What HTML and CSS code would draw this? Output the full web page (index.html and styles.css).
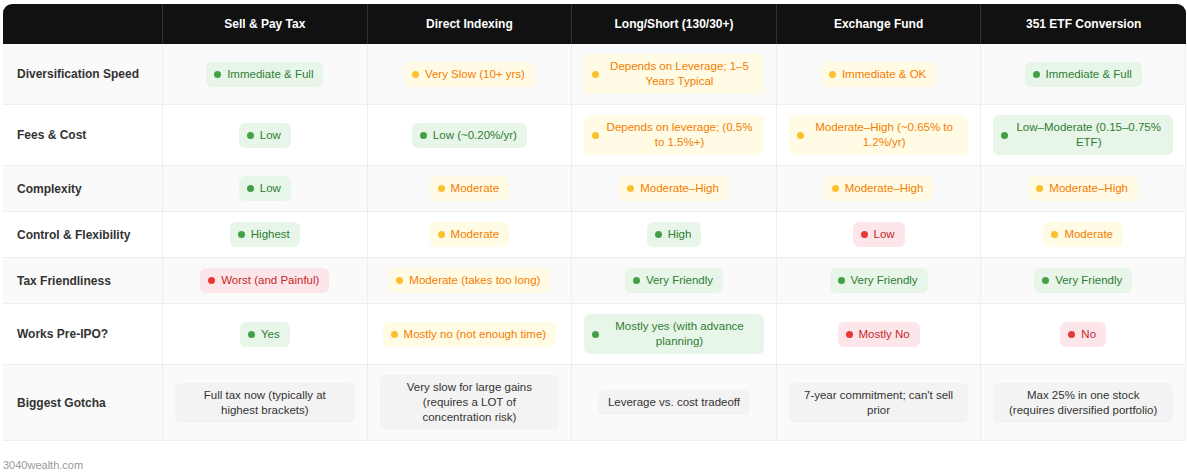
FILE: index.html
```html
<!DOCTYPE html>
<html lang="en">
<head>
  <meta charset="UTF-8">
  <meta name="viewport" content="width=device-width, initial-scale=1.0">
  <title>Concentrated Stock Strategies Compared</title>
  <link rel="stylesheet" href="styles.css">
</head>
<body>
  <div class="compare-wrap">
    <table class="compare-table">
      <colgroup>
        <col class="col-label">
        <col><col><col><col><col>
      </colgroup>
      <thead>
        <tr>
          <th></th>
          <th>Sell &amp; Pay Tax</th>
          <th>Direct Indexing</th>
          <th>Long/Short (130/30+)</th>
          <th>Exchange Fund</th>
          <th>351 ETF Conversion</th>
        </tr>
      </thead>
      <tbody>
        <tr>
          <td class="label">Diversification Speed</td>
          <td><span class="badge good"><i></i><span>Immediate &amp; Full</span></span></td>
          <td><span class="badge mid"><i></i><span>Very Slow (10+ yrs)</span></span></td>
          <td><span class="badge mid"><i></i><span>Depends on Leverage; 1–5 Years Typical</span></span></td>
          <td><span class="badge mid"><i></i><span>Immediate &amp; OK</span></span></td>
          <td><span class="badge good"><i></i><span>Immediate &amp; Full</span></span></td>
        </tr>
        <tr>
          <td class="label">Fees &amp; Cost</td>
          <td><span class="badge good"><i></i><span>Low</span></span></td>
          <td><span class="badge good"><i></i><span>Low (~0.20%/yr)</span></span></td>
          <td><span class="badge mid"><i></i><span>Depends on leverage; (0.5% to 1.5%+)</span></span></td>
          <td><span class="badge mid"><i></i><span>Moderate–High (~0.65% to 1.2%/yr)</span></span></td>
          <td><span class="badge good"><i></i><span>Low–Moderate (0.15–0.75% ETF)</span></span></td>
        </tr>
        <tr>
          <td class="label">Complexity</td>
          <td><span class="badge good"><i></i><span>Low</span></span></td>
          <td><span class="badge mid"><i></i><span>Moderate</span></span></td>
          <td><span class="badge mid"><i></i><span>Moderate–High</span></span></td>
          <td><span class="badge mid"><i></i><span>Moderate–High</span></span></td>
          <td><span class="badge mid"><i></i><span>Moderate–High</span></span></td>
        </tr>
        <tr>
          <td class="label">Control &amp; Flexibility</td>
          <td><span class="badge good"><i></i><span>Highest</span></span></td>
          <td><span class="badge mid"><i></i><span>Moderate</span></span></td>
          <td><span class="badge good"><i></i><span>High</span></span></td>
          <td><span class="badge bad"><i></i><span>Low</span></span></td>
          <td><span class="badge mid"><i></i><span>Moderate</span></span></td>
        </tr>
        <tr>
          <td class="label">Tax Friendliness</td>
          <td><span class="badge bad"><i></i><span>Worst (and Painful)</span></span></td>
          <td><span class="badge mid"><i></i><span>Moderate (takes too long)</span></span></td>
          <td><span class="badge good"><i></i><span>Very Friendly</span></span></td>
          <td><span class="badge good"><i></i><span>Very Friendly</span></span></td>
          <td><span class="badge good"><i></i><span>Very Friendly</span></span></td>
        </tr>
        <tr>
          <td class="label">Works Pre-IPO?</td>
          <td><span class="badge good"><i></i><span>Yes</span></span></td>
          <td><span class="badge mid"><i></i><span>Mostly no (not enough time)</span></span></td>
          <td><span class="badge good"><i></i><span>Mostly yes (with advance planning)</span></span></td>
          <td><span class="badge bad"><i></i><span>Mostly No</span></span></td>
          <td><span class="badge bad"><i></i><span>No</span></span></td>
        </tr>
        <tr>
          <td class="label">Biggest Gotcha</td>
          <td><span class="note">Full tax now (typically at highest brackets)</span></td>
          <td><span class="note">Very slow for large gains (requires a LOT of concentration risk)</span></td>
          <td><span class="note">Leverage vs. cost tradeoff</span></td>
          <td><span class="note">7-year commitment; can't sell prior</span></td>
          <td><span class="note">Max 25% in one stock (requires diversified portfolio)</span></td>
        </tr>
      </tbody>
    </table>
  </div>

  <footer class="source">3040wealth.com</footer>
</body>
</html>
```

FILE: styles.css
```css
* {
  margin: 0;
  padding: 0;
  box-sizing: border-box;
}

body {
  font-family: 'Liberation Sans', Arial, sans-serif;
  font-size: 11.5px;
  color: #333;
  background-color: #fff;
  padding: 4px 1px 0 3px;
}

.compare-wrap {
  border-radius: 9px 9px 0 0;
  overflow: hidden;
}

.compare-table {
  width: 100%;
  table-layout: fixed;
  border-collapse: separate;
  border-spacing: 0;
}

.col-label {
  width: 160px;
}

.compare-table th {
  background-color: #111;
  color: #fff;
  font-size: 12px;
  font-weight: bold;
  line-height: 16px;
  padding: 12px;
  text-align: center;
  border-right: 1px solid #333;
}

.compare-table th:last-child {
  border-right: none;
}

.compare-table td {
  padding: 10px 12px;
  text-align: center;
  vertical-align: middle;
  border-bottom: 1px solid #eee;
  border-right: 1px solid #eee;
}

.compare-table tbody tr:nth-child(odd) td {
  background-color: #fafafa;
}

.compare-table td.label {
  text-align: left;
  padding-left: 14px;
  font-size: 12px;
  font-weight: bold;
  color: #333;
}

.badge {
  display: inline-flex;
  align-items: center;
  gap: 6px;
  padding: 5px 10px 5px 8px;
  border-radius: 6px;
  line-height: 15px;
}

.badge i {
  flex: none;
  width: 7px;
  height: 7px;
  border-radius: 50%;
}

.badge span {
  text-align: center;
}

.badge.good {
  background-color: #e8f5e9;
  color: #2e7d32;
}

.badge.good i {
  background-color: #43a047;
}

.badge.mid {
  background-color: #fffbe5;
  color: #f57c00;
}

.badge.mid i {
  background-color: #fbc02d;
}

.badge.bad {
  background-color: #fde6ea;
  color: #c62828;
}

.badge.bad i {
  background-color: #e53935;
}

.note {
  display: inline-block;
  padding: 5px 10px;
  border-radius: 6px;
  line-height: 15px;
  background-color: #f3f3f3;
  color: #333;
}

.source {
  margin-top: 18px;
  font-size: 11px;
  color: #999;
}
```
